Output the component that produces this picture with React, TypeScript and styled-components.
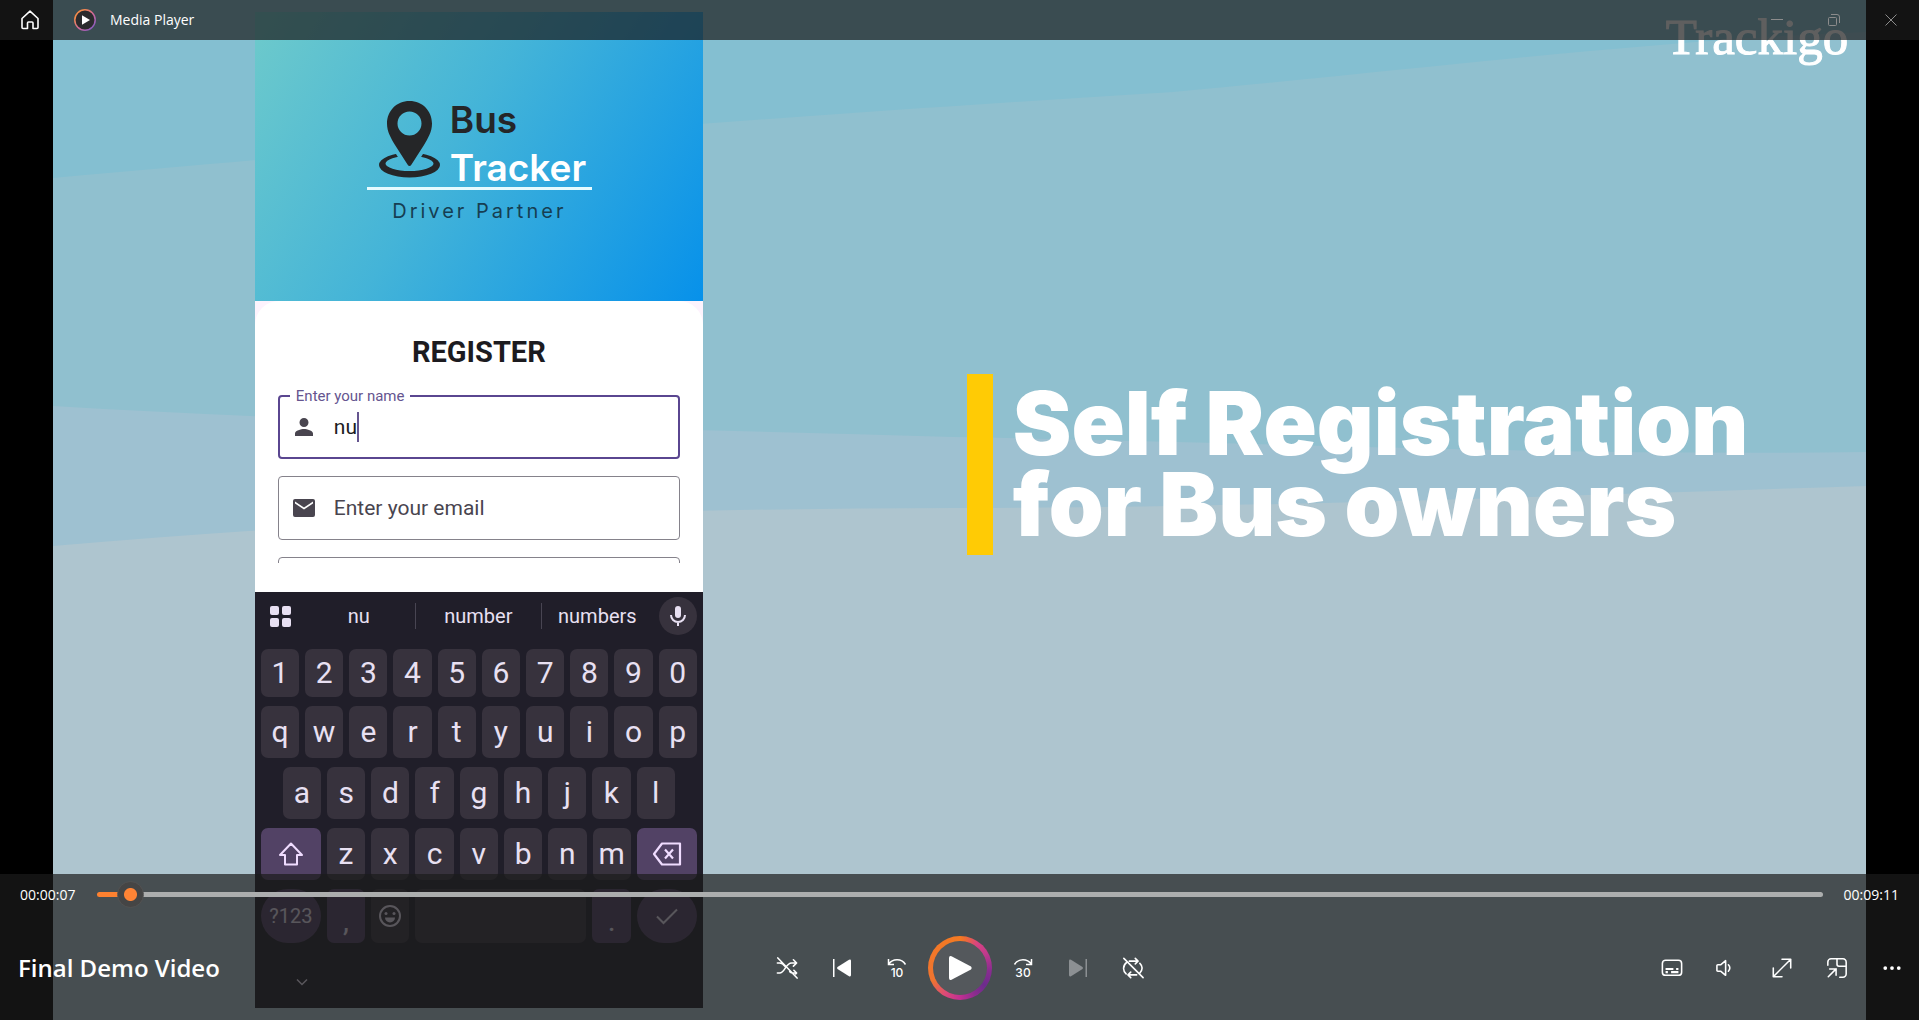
import React from 'react';
import styled, { createGlobalStyle } from 'styled-components';

const Global = createGlobalStyle`
  *, *::before, *::after { box-sizing: border-box; }
  body { margin: 0; background: #000; }
  button, input { font: inherit; color: inherit; }
`;

const ui = `"Segoe UI", "Open Sans", sans-serif`;
const mobile = `Roboto, sans-serif`;

/* ---------- Shell ---------- */
const Player = styled.div`
  display: grid;
  min-height: 100vh;
  background: #000;
  font-family: ${ui};
  color: #fff;
  overflow: hidden;
`;

const Chrome = styled.div`
  grid-area: 1 / 1;
  display: flex;
  flex-direction: column;
  justify-content: space-between;
  z-index: 1;
`;

const Glass = styled.div`
  background: rgba(27, 27, 27, 0.7);
`;

/* ---------- Video frame ---------- */
const Video = styled.main`
  grid-area: 1 / 1;
  justify-self: center;
  height: 100vh;
  aspect-ratio: 16 / 9;
  display: grid;
  grid-template-columns: 202px 448px 1fr;
  background: #aec5cf;
  overflow: hidden;
`;

const Waves = styled.svg`
  grid-area: 1 / 1 / 2 / 4;
  width: 100%;
  height: 100%;
  display: block;
`;

const Slide = styled.section`
  grid-area: 1 / 3;
  display: flex;
  flex-direction: column;
  align-items: flex-start;
`;

const Brand = styled.div`
  align-self: flex-end;
  height: 374px;
  padding: 13px 18px 0 0;
  font: 400 51px/48px "Liberation Serif", serif;
  -webkit-text-stroke: 1px #fff;
`;

const Caption = styled.h1`
  margin: 0 0 0 264px;
  padding: 9px 0 10px 20px;
  border-left: 26px solid #ffcb05;
  font: 900 88px/81px Inter, sans-serif;
  white-space: nowrap;
`;

/* ---------- Phone ---------- */
const Phone = styled.section`
  grid-area: 1 / 2;
  align-self: start;
  margin-top: 12px;
  display: flex;
  flex-direction: column;
  font-family: ${mobile};
`;

const Hero = styled.header`
  height: 289px;
  padding: 88px 111px 0 112px;
  background: linear-gradient(122deg, #6ecacb 0%, #44b4d8 45%, #0791ea 100%);
  display: flex;
  flex-direction: column;
`;

const LogoRow = styled.div`
  display: flex;
  align-items: flex-start;
  gap: 10px;
  padding-left: 12px;
  height: 87px;
`;

const LogoText = styled.div`
  font: 600 37px/48px Inter, sans-serif;
  color: #fff;
  margin-top: -4px;
`;

const LogoDark = styled.div`
  color: #252628;
`;

const Tagline = styled.div`
  border-top: 3px solid #e6fbff;
  padding-top: 9px;
  text-align: center;
  white-space: nowrap;
  font: 400 20px/24px Inter, sans-serif;
  letter-spacing: 3px;
  color: #163e52;
`;

const Backdrop = styled.div`
  background: #fdf3fd;
`;

const Card = styled.form`
  height: 291px;
  background: #fff;
  border-radius: 24px 24px 0 0;
  padding: 33px 23px 0 23px;
`;

const Title = styled.h2`
  margin: 0;
  font: 700 29px/36px ${mobile};
  color: #1c1b1f;
  text-align: center;
`;

const Fields = styled.div`
  margin-top: 16px;
  padding-top: 9px;
  height: 177px;
  overflow: hidden;
  display: flex;
  flex-direction: column;
  gap: 17px;
`;

const Field = styled.div<{ $active?: boolean }>`
  position: relative;
  flex: 0 0 64px;
  display: flex;
  align-items: center;
  padding-left: ${(p) => (p.$active ? 12 : 13)}px;
  border: ${(p) => (p.$active ? '2px solid #5a4690' : '1px solid #85828b')};
  border-radius: 4px;
  color: #49454f;
`;

const FieldLabel = styled.label`
  position: absolute;
  top: -10px;
  left: 10px;
  padding: 0 6px;
  background: #fff;
  font-size: 15px;
  line-height: 18px;
  color: #65558f;
`;

const FieldInput = styled.input<{ $fit?: boolean }>`
  margin-left: 18px;
  padding: 0;
  border: 0;
  outline: 0;
  background: none;
  font: 400 21px/28px ${mobile};
  color: #1c1b1f;
  min-width: 0;
  ${(p) => (p.$fit ? 'field-sizing: content;' : 'flex: 1;')}
  &::placeholder { color: #49454f; opacity: 1; }
`;

const Caret = styled.span`
  width: 2px;
  height: 30px;
  background: #65558f;
`;

/* ---------- Keyboard ---------- */
const Keyboard = styled.div`
  background: #201e29;
  padding: 0 6px;
  height: 416px;
  display: flex;
  flex-direction: column;
  color: #e8e0f2;
`;

const Suggestions = styled.div`
  display: flex;
  align-items: center;
  height: 48px;
  margin-bottom: 9px;
  padding-left: 9px;
`;

const SuggestList = styled.div`
  display: flex;
  margin-left: 12px;
`;

const Suggest = styled.button<{ $w: number }>`
  width: ${(p) => p.$w}px;
  height: 26px;
  padding: 0;
  border: 0;
  background: none;
  font-size: 20px;
  line-height: 26px;
  & + & { border-left: 1px solid #484552; }
`;

const PlainKey = styled.button`
  border: 0;
  padding: 0;
  background: none;
  display: grid;
  place-items: center;
`;

const MicKey = styled(PlainKey)`
  width: 38px;
  height: 38px;
  margin-left: auto;
  border-radius: 50%;
  background: #37323d;
`;

const KeyRow = styled.div<{ $h: number; $inset?: boolean }>`
  display: flex;
  gap: 6px;
  height: ${(p) => p.$h}px;
  margin-bottom: 9px;
  padding: 0 ${(p) => (p.$inset ? 22 : 0)}px;
`;

const Key = styled.button<{ $tone?: 'accent'; $wide?: boolean; $space?: boolean; $round?: boolean; $low?: boolean }>`
  flex: ${(p) => (p.$wide ? '0 0 60px' : p.$space ? '0 0 171px' : '1 1 0')};
  min-width: 0;
  padding: ${(p) => (p.$low ? '10px 0 0' : '0')};
  border: 0;
  border-radius: ${(p) => (p.$round ? 28 : 7)}px;
  background: ${(p) => (p.$tone ? '#524265' : '#37323d')};
  display: flex;
  align-items: center;
  justify-content: center;
  font-size: ${(p) => (p.$round ? 20 : 30)}px;
  line-height: 36px;
`;

const HideKey = styled(PlainKey)`
  width: 24px;
  height: 24px;
  margin: 18px 0 0 29px;
`;

/* ---------- Title bar ---------- */
const TitleBar = styled(Glass)`
  height: 40px;
  display: flex;
  align-items: center;
`;

const BarButton = styled.button<{ $w: number; $dim?: boolean }>`
  width: ${(p) => p.$w}px;
  height: 40px;
  padding: 0;
  border: 0;
  background: none;
  color: ${(p) => (p.$dim ? '#8c8c8c' : '#fff')};
  display: grid;
  place-items: center;
`;

const AppLogo = styled.svg`
  margin-left: 14px;
`;

const AppName = styled.span`
  margin: 0 auto 0 14px;
  font-size: 14px;
  line-height: 20px;
`;

/* ---------- Transport ---------- */
const Transport = styled(Glass)`
  display: flex;
  flex-direction: column;
`;

const Timeline = styled.div`
  display: flex;
  align-items: center;
  height: 41px;
  padding: 0 20px;
  font-size: 14px;
  line-height: 20px;
`;

const Time = styled.span<{ $end?: boolean }>`
  width: ${(p) => (p.$end ? 76 : 77)}px;
  text-align: ${(p) => (p.$end ? 'right' : 'left')};
`;

const Seek = styled.input`
  -webkit-appearance: none;
  appearance: none;
  flex: 1;
  min-width: 0;
  height: 27px;
  margin: 0;
  background: none;
  &::-webkit-slider-runnable-track {
    height: 5px;
    border-radius: 3px;
    background: linear-gradient(to right, #fd8130 2%, #acaeae 2%);
  }
  &::-webkit-slider-thumb {
    -webkit-appearance: none;
    width: 27px;
    height: 27px;
    margin-top: -11px;
    border-radius: 50%;
    border: 1px solid #525252;
    background: radial-gradient(circle, #ff8435 6px, #454545 7px);
  }
`;

const Controls = styled.div`
  height: 105px;
  display: grid;
  grid-template-columns: 1fr auto 1fr;
  align-items: center;
`;

const MediaTitle = styled.div`
  padding-left: 18px;
  font-size: 24px;
  line-height: 32px;
  font-weight: 600;
`;

const Group = styled.div<{ $end?: boolean }>`
  display: flex;
  align-items: center;
  gap: 7px;
  justify-content: ${(p) => (p.$end ? 'flex-end' : 'center')};
  padding-right: ${(p) => (p.$end ? 3 : 0)}px;
`;

const Control = styled.button`
  width: 48px;
  height: 48px;
  padding: 0;
  border: 0;
  background: none;
  display: grid;
  place-items: center;
  &:disabled { color: #8c9093; }
`;

const PlayButton = styled.button`
  width: 64px;
  height: 64px;
  padding: 5px;
  border: 0;
  border-radius: 50%;
  background: conic-gradient(#f47a22 0deg, #f0702c 8deg, #d94382 35deg, #c23a8c 60deg, #8a2c90 95deg, #6c2c8c 125deg, #8a2c8e 150deg, #c22f92 180deg, #dc4a78 210deg, #f07430 245deg, #f47a22 360deg);
`;

const PlayDisc = styled.span`
  display: grid;
  place-items: center;
  width: 100%;
  height: 100%;
  border-radius: 50%;
  background: #54585c;
`;

const Line = ({ s = 22, w = 1.7, children }: { s?: number; w?: number; children: React.ReactNode }) => (
  <svg width={s} height={s} viewBox="0 0 24 24" fill="none" stroke="currentColor" strokeWidth={w} strokeLinecap="round" strokeLinejoin="round" aria-hidden="true">
    {children}
  </svg>
);

const Solid = ({ s = 24, children }: { s?: number; children: React.ReactNode }) => (
  <svg width={s} height={s} viewBox="0 0 24 24" fill="currentColor" aria-hidden="true">{children}</svg>
);

const Letters = ({ keys }: { keys: string }) => (
  <>{keys.split('').map((k) => <Key key={k} type="button">{k}</Key>)}</>
);

const Backdrops = () => (
  <Waves viewBox="0 0 1813 1020" preserveAspectRatio="none" aria-hidden="true">
    <rect width="1813" height="1020" fill="#aec5cf" />
    <path d="M0 0H1813V486C1500 496 1200 508 900 508C600 508 300 520 0 546Z" fill="#9ec1d1" />
    <path d="M0 0H1813V452C1500 456 1200 442 900 437C600 428 300 424 0 406Z" fill="#90c0cf" />
    <path d="M0 0H1813V32C1600 40 1400 66 1120 92C700 118 400 142 0 178Z" fill="#84bfd1" />
  </Waves>
);

const pin = 'M30.500 1C17.500 1 8 11 8 23.500C8 32 12 38 16 45L28.500 64.500Q30.500 67.500 32.500 64.500L45 45C49 38 53 32 53 23.500C53 11 43.500 1 30.500 1Z';

const PhoneScreen = () => (
  <Phone>
    <Hero>
      <LogoRow>
        <svg width="61" height="78" viewBox="0 0 61 78" aria-hidden="true">
          <mask id="pinGap">
            <rect width="61" height="78" fill="#fff" />
            <path d={pin} fill="#000" stroke="#000" strokeWidth="8" />
            <rect y="67" width="61" height="11" fill="#fff" />
          </mask>
          <path mask="url(#pinGap)" fillRule="evenodd" fill="#252628" d="M0 65A30.500 12.500 0 1 1 61 65A30.500 12.500 0 1 1 0 65ZM6.500 63.500A24 7.500 0 1 0 54.500 63.500A24 7.500 0 1 0 6.500 63.500Z" />
          <path fillRule="evenodd" fill="#252628" d={`${pin}M30.500 11.500A12 12 0 1 1 30.500 35.500A12 12 0 1 1 30.500 11.500Z`} />
        </svg>
        <LogoText><LogoDark>Bus</LogoDark>Tracker</LogoText>
      </LogoRow>
      <Tagline>Driver Partner</Tagline>
    </Hero>
    <Backdrop>
      <Card>
        <Title>REGISTER</Title>
        <Fields>
          <Field $active>
            <FieldLabel htmlFor="name">Enter your name</FieldLabel>
            <Solid><path d="M12 12a4.500 4.500 0 1 0 0-9 4.500 4.500 0 0 0 0 9zM3 21v-2.500c0-3 6-4.500 9-4.500s9 1.500 9 4.500V21z" /></Solid>
            <FieldInput id="name" $fit defaultValue="nu" />
            <Caret />
          </Field>
          <Field>
            <Solid><path fillRule="evenodd" d="M3 3h18a2 2 0 0 1 2 2v14a2 2 0 0 1-2 2H3a2 2 0 0 1-2-2V5a2 2 0 0 1 2-2zm0 2.500V7.500l9 6 9-6V5.500l-9 6z" /></Solid>
            <FieldInput aria-label="Enter your email" placeholder="Enter your email" />
          </Field>
          <Field />
        </Fields>
      </Card>
    </Backdrop>
    <Keyboard>
      <Suggestions>
        <PlainKey type="button" aria-label="Tools">
          <svg width="21" height="21" viewBox="0 0 21 21" fill="currentColor">
            <rect width="9" height="9" rx="2" /><rect x="12" width="9" height="9" rx="2" />
            <rect y="12" width="9" height="9" rx="2" /><rect x="12" y="12" width="9" height="9" rx="2" />
          </svg>
        </PlainKey>
        <SuggestList>
          <Suggest type="button" $w={112}>nu</Suggest>
          <Suggest type="button" $w={126}>number</Suggest>
          <Suggest type="button" $w={112}>numbers</Suggest>
        </SuggestList>
        <MicKey type="button" aria-label="Voice input">
          <svg width="16" height="22" viewBox="0 0 16 22" fill="none" stroke="currentColor" strokeWidth="2">
            <rect x="5" y="1" width="6" height="12" rx="3" fill="currentColor" stroke="none" />
            <path d="M1 10a7 7 0 0 0 14 0M8 17v4" />
          </svg>
        </MicKey>
      </Suggestions>
      <KeyRow $h={48}><Letters keys="1234567890" /></KeyRow>
      <KeyRow $h={52}><Letters keys="qwertyuiop" /></KeyRow>
      <KeyRow $h={52} $inset><Letters keys="asdfghjkl" /></KeyRow>
      <KeyRow $h={52}>
        <Key type="button" $tone="accent" $wide aria-label="Shift">
          <svg width="26" height="24" viewBox="0 0 26 24" fill="none" stroke="#f0dcff" strokeWidth="2" strokeLinejoin="round"><path d="M13 1.500L24 13H19V22.500H7V13H2Z" /></svg>
        </Key>
        <Letters keys="zxcvbnm" />
        <Key type="button" $tone="accent" $wide aria-label="Backspace">
          <svg width="30" height="24" viewBox="0 0 30 24" fill="none" stroke="#f0dcff" strokeWidth="2.200" strokeLinejoin="round"><path d="M10 1.500H28V22.500H10L2 12ZM13 7.500l8 9M21 7.500l-8 9" /></svg>
        </Key>
      </KeyRow>
      <KeyRow $h={54}>
        <Key type="button" $tone="accent" $wide $round>?123</Key>
        <Key type="button" $tone="accent" $low>,</Key>
        <Key type="button" aria-label="Emoji">
          <svg width="22" height="22" viewBox="0 0 22 22" fill="none" stroke="currentColor" strokeWidth="2">
            <circle cx="11" cy="11" r="10" /><circle cx="7" cy="8.500" r="1.500" fill="currentColor" stroke="none" /><circle cx="15" cy="8.500" r="1.500" fill="currentColor" stroke="none" />
            <path d="M6 12.500h10a5 5 0 0 1-10 0z" fill="currentColor" stroke="none" />
          </svg>
        </Key>
        <Key type="button" $space aria-label="Space" />
        <Key type="button" $tone="accent" $low>.</Key>
        <Key type="button" $tone="accent" $wide $round aria-label="Done">
          <svg width="22" height="17" viewBox="0 0 22 17" fill="none" stroke="currentColor" strokeWidth="2"><path d="M1 8.500L7.500 15L21 1.500" /></svg>
        </Key>
      </KeyRow>
      <HideKey type="button" aria-label="Hide keyboard">
        <svg width="12" height="8" viewBox="0 0 12 8" fill="none" stroke="currentColor" strokeWidth="1.500"><path d="M1 1.500l5 5 5-5" /></svg>
      </HideKey>
    </Keyboard>
  </Phone>
);

export default function App() {
  return (
    <Player>
      <Global />
      <Video>
        <Backdrops />
        <PhoneScreen />
        <Slide>
          <Brand>Trackigo</Brand>
          <Caption>Self Registration<br />for Bus owners</Caption>
        </Slide>
      </Video>
      <Chrome>
        <TitleBar as="header">
          <BarButton type="button" $w={60} aria-label="Home">
            <svg width="20" height="20" viewBox="0 0 20 20" fill="none" stroke="currentColor" strokeWidth="1.600" strokeLinejoin="round"><path d="M2 8.500L10 1.200L18 8.500V17.500a1 1 0 0 1-1 1H13V13a1 1 0 0 0-1-1H8.500a1 1 0 0 0-1 1v5.500H3a1 1 0 0 1-1-1Z" /></svg>
          </BarButton>
          <AppLogo width="22" height="22" viewBox="0 0 22 22" aria-hidden="true">
            <defs>
              <linearGradient id="ring" x1="0" y1="0" x2="1" y2="1">
                <stop offset="0.200" stopColor="#f58a4a" /><stop offset="0.550" stopColor="#d0689c" /><stop offset="0.900" stopColor="#8a5cc0" />
              </linearGradient>
            </defs>
            <circle cx="11" cy="11" r="10.200" fill="#2b2b2d" stroke="url(#ring)" strokeWidth="1.500" />
            <path d="M8 6.200L16 11L8 15.800Z" fill="#fff" />
          </AppLogo>
          <AppName>Media Player</AppName>
          <BarButton type="button" $w={57} $dim aria-label="Minimize">
            <svg width="12" height="12" viewBox="0 0 12 12" stroke="currentColor"><path d="M0 5.500h12" /></svg>
          </BarButton>
          <BarButton type="button" $w={57} $dim aria-label="Restore">
            <svg width="12" height="12" viewBox="0 0 12 12" fill="none" stroke="currentColor"><rect x="0.500" y="3.500" width="8" height="8" rx="1" /><path d="M3 0.500h6a2.500 2.500 0 0 1 2.500 2.500v6" /></svg>
          </BarButton>
          <BarButton type="button" $w={57} $dim aria-label="Close">
            <svg width="12" height="12" viewBox="0 0 12 12" stroke="currentColor"><path d="M0.500 0.500l11 11M11.500 0.500l-11 11" /></svg>
          </BarButton>
        </TitleBar>
        <Transport as="footer">
          <Timeline>
            <Time>00:00:07</Time>
            <Seek type="range" min={0} max={551} step="any" defaultValue={6.5} aria-label="Seek" />
            <Time $end>00:09:11</Time>
          </Timeline>
          <Controls>
            <MediaTitle>Final Demo Video</MediaTitle>
            <Group>
              <Control type="button" aria-label="Shuffle off">
                <Line><path d="M1.500 6.500H4c3 0 4.500 2 6 4M1.500 17.500H4c5.500 0 6.500-11 13-11h5M19 3l3.500 3.500L19 10M15 16c1 1 2 1.500 3.500 1.500h3.500M19.500 14.500l3 3-1 1M2 1l21 22" /></Line>
              </Control>
              <Control type="button" aria-label="Previous">
                <svg width="20" height="20" viewBox="0 0 20 20" fill="currentColor"><rect x="1" y="1" width="1.500" height="18" /><path d="M17 1.800L5.500 9Q4.500 10 5.500 11L17 18.200Q19 19 19 17V3Q19 1 17 1.800Z" /></svg>
              </Control>
              <Control type="button" aria-label="Skip back 10 seconds">
                <svg width="22" height="22" viewBox="0 0 22 22" fill="none" stroke="currentColor" strokeWidth="1.500"><path d="M2.500 2v5.500H8M2.800 7C6.500 1.500 15.500 1 19.500 7.500" /><text x="11" y="19.500" textAnchor="middle" fontFamily="Inter, sans-serif" fontSize="12" fontWeight="500" fill="currentColor" stroke="none">10</text></svg>
              </Control>
              <PlayButton type="button" aria-label="Play">
                <PlayDisc>
                  <svg width="26" height="28" viewBox="0 0 26 28" fill="#fff"><path d="M4.500 2.300L24 12.600Q25.500 14 24 15.400L4.500 25.700Q2 26.500 2 24V4Q2 1.500 4.500 2.300Z" /></svg>
                </PlayDisc>
              </PlayButton>
              <Control type="button" aria-label="Skip forward 30 seconds">
                <svg width="22" height="22" viewBox="0 0 22 22" fill="none" stroke="currentColor" strokeWidth="1.500"><path d="M19.500 2v5.500H14M19.200 7C15.500 1.500 6.500 1 2.500 7.500" /><text x="11" y="19.500" textAnchor="middle" fontFamily="Inter, sans-serif" fontSize="12" fontWeight="500" fill="currentColor" stroke="none">30</text></svg>
              </Control>
              <Control type="button" disabled aria-label="Next">
                <svg width="20" height="20" viewBox="0 0 20 20" fill="currentColor"><rect x="17.500" y="1" width="1.500" height="18" /><path d="M3 1.800L14.500 9Q15.500 10 14.500 11L3 18.200Q1 19 1 17V3Q1 1 3 1.800Z" /></svg>
              </Control>
              <Control type="button" aria-label="Repeat off">
                <Line><path d="M8 4.500h9M14.500 1.500l3 3-3 3M5 6a8 8 0 0 0-.5 12.500M19.500 7c3 3 3 7 0 10.500M16 19.500H7M9.500 16.500l-3 3 3 3M2 1.500l21 21" /></Line>
              </Control>
            </Group>
            <Group $end>
              <Control type="button" aria-label="Subtitles">
                <Line><rect x="1.500" y="3.500" width="21" height="16.500" rx="3.500" /><path d="M5 13.200h8.500M16.500 13.200h2.500M5 16.500h2.500M11 16.500h8" strokeWidth="2.200" strokeLinecap="butt" /></Line>
              </Control>
              <Control type="button" aria-label="Volume">
                <Line><path d="M1 9.500a1 1 0 0 1 1-1h3L10.500 4V20L5 15.500H2a1 1 0 0 1-1-1ZM13.500 8.500c1.800 2 1.800 5 0 7" /></Line>
              </Control>
              <Control type="button" aria-label="Full screen">
                <Line><path d="M2.500 21.500L21.500 2.500M12 2.500h9.500V12M2.500 12v9.500H12" /></Line>
              </Control>
              <Control type="button" aria-label="Mini player">
                <Line><path d="M2 9V5.500A3.500 3.500 0 0 1 5.500 2h13A3.500 3.500 0 0 1 22 5.500v13a3.500 3.500 0 0 1-3.500 3.500H15M12 2v6a2 2 0 0 0 2 2h8M2.500 21.500l8.500-8.500M4 13h7v7" /></Line>
              </Control>
              <Control type="button" aria-label="More options">
                <Solid s={18}><circle cx="3" cy="12" r="2.500" /><circle cx="12" cy="12" r="2.500" /><circle cx="21" cy="12" r="2.500" /></Solid>
              </Control>
            </Group>
          </Controls>
        </Transport>
      </Chrome>
    </Player>
  );
}
